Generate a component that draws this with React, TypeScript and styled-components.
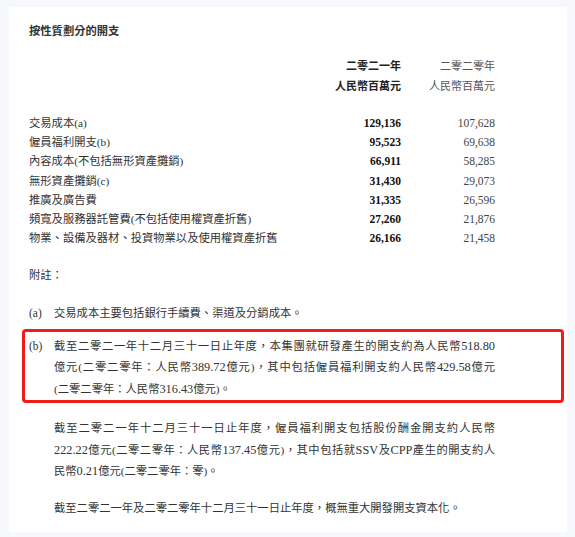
import React from "react";
import styled, { createGlobalStyle } from "styled-components";

const Global = createGlobalStyle`
  html, body { margin: 0; padding: 0; background: #f7f8fc; }
  body { font-family: "Liberation Serif", "Noto Sans CJK TC", serif; color: #333; }
`;

const Card = styled.div`
  margin: 7px 8px 0 9px;
  height: 525px;
  box-sizing: border-box;
  background: #fff;
  padding: 15px 72px 0 20px;
  font-size: 11.3px;
`;

const Title = styled.div`
  font-family: "Noto Sans CJK TC", sans-serif;
  font-weight: 700;
  font-size: 11.3px;
  line-height: 16px;
  color: #333;
`;

const Table = styled.div`
  display: grid;
  grid-template-columns: 1fr 94px 94px;
  margin-top: 17px;
`;

const HeadCell = styled.div<{ $bold?: boolean }>`
  text-align: right;
  line-height: 20px;
  font-size: 11px;
  font-family: "Noto Sans CJK TC", sans-serif;
  font-weight: ${(p) => (p.$bold ? 700 : 400)};
  color: ${(p) => (p.$bold ? "#222" : "#555")};
`;

const Spacer = styled.div<{ $h: number }>`
  grid-column: 1 / -1;
  height: ${(p) => p.$h}px;
`;

const Label = styled.div`
  line-height: 19.2px;
  color: #333;
  white-space: nowrap;
`;

const Num = styled.div<{ $bold?: boolean }>`
  text-align: right;
  line-height: 19.2px;
  font-size: 11.5px;
  font-weight: ${(p) => (p.$bold ? 700 : 400)};
  color: ${(p) => (p.$bold ? "#111" : "#444")};
`;

const NoteHead = styled.div`
  margin-top: 17px;
  line-height: 20px;
`;

const Note = styled.div<{ $mt: number }>`
  display: grid;
  grid-template-columns: 25px 1fr;
  margin-top: ${(p) => p.$mt}px;
`;

const NoteBlock = styled.div<{ $mt: number }>`
  display: flex;
  flex-direction: column;
  margin-top: ${(p) => p.$mt}px;
`;

const Marker = styled.div`
  line-height: 21.5px;
  font-size: 11.5px;
`;

const Body = styled.div<{ $indent?: boolean }>`
  display: flex;
  flex-direction: column;
  margin-left: ${(p) => (p.$indent ? 25 : 0)}px;
`;

const Para = styled.div<{ $mt?: number }>`
  margin-top: ${(p) => p.$mt ?? 0}px;
`;

const Line = styled.div<{ $justify?: boolean }>`
  line-height: 21.5px;
  white-space: nowrap;
  text-align: justify;
  text-align-last: ${(p) => (p.$justify ? "justify" : "left")};
`;

const Lat = styled.span`
  font-size: 12.3px;
`;

const Highlight = styled.div`
  border: 3px solid #f01c1c;
  border-radius: 4px;
  margin: 0 -69px 0 -7px;
  padding: 4px 66px 0 4px;
  display: grid;
  grid-template-columns: 25px 1fr;
`;

const rows: [string, string, string][] = [
  ["交易成本(a)", "129,136", "107,628"],
  ["僱員福利開支(b)", "95,523", "69,638"],
  ["內容成本(不包括無形資產攤銷)", "66,911", "58,285"],
  ["無形資產攤銷(c)", "31,430", "29,073"],
  ["推廣及廣告費", "31,335", "26,596"],
  ["頻寬及服務器託管費(不包括使用權資產折舊)", "27,260", "21,876"],
  ["物業、設備及器材、投資物業以及使用權資產折舊", "26,166", "21,458"],
];

export default function App() {
  return (
    <>
      <Global />
      <Card>
        <Title>按性質劃分的開支</Title>
        <Table>
          <div />
          <HeadCell $bold>二零二一年</HeadCell>
          <HeadCell>二零二零年</HeadCell>
          <div />
          <HeadCell $bold>人民幣百萬元</HeadCell>
          <HeadCell>人民幣百萬元</HeadCell>
          <Spacer $h={19} />
          {rows.map(([l, a, b]) => (
            <React.Fragment key={l}>
              <Label>{l}</Label>
              <Num $bold>{a}</Num>
              <Num>{b}</Num>
            </React.Fragment>
          ))}
        </Table>
        <NoteHead>附註：</NoteHead>
        <Note $mt={18}>
          <Marker>(a)</Marker>
          <Body>
            <Line>交易成本主要包括銀行手續費、渠道及分銷成本。</Line>
          </Body>
        </Note>
        <NoteBlock $mt={4}>
          <Highlight>
            <Marker>(b)</Marker>
            <Body>
              <Line $justify>截至二零二一年十二月三十一日止年度，本集團就研發產生的開支約為人民幣<Lat>518.80</Lat></Line>
              <Line $justify>億元(二零二零年：人民幣<Lat>389.72</Lat>億元)，其中包括僱員福利開支約人民幣<Lat>429.58</Lat>億元</Line>
              <Line>(二零二零年：人民幣<Lat>316.43</Lat>億元)。</Line>
            </Body>
          </Highlight>
          <Body $indent>
            <Para $mt={15}>
              <Line $justify>截至二零二一年十二月三十一日止年度，僱員福利開支包括股份酬金開支約人民幣</Line>
              <Line $justify><Lat>222.22</Lat>億元(二零二零年：人民幣<Lat>137.45</Lat>億元)，其中包括就<Lat>SSV</Lat>及<Lat>CPP</Lat>產生的開支約人</Line>
              <Line>民幣<Lat>0.21</Lat>億元(二零二零年：零)。</Line>
            </Para>
            <Para $mt={15}>
              <Line>截至二零二一年及二零二零年十二月三十一日止年度，概無重大開發開支資本化。</Line>
            </Para>
          </Body>
        </NoteBlock>
      </Card>
    </>
  );
}
